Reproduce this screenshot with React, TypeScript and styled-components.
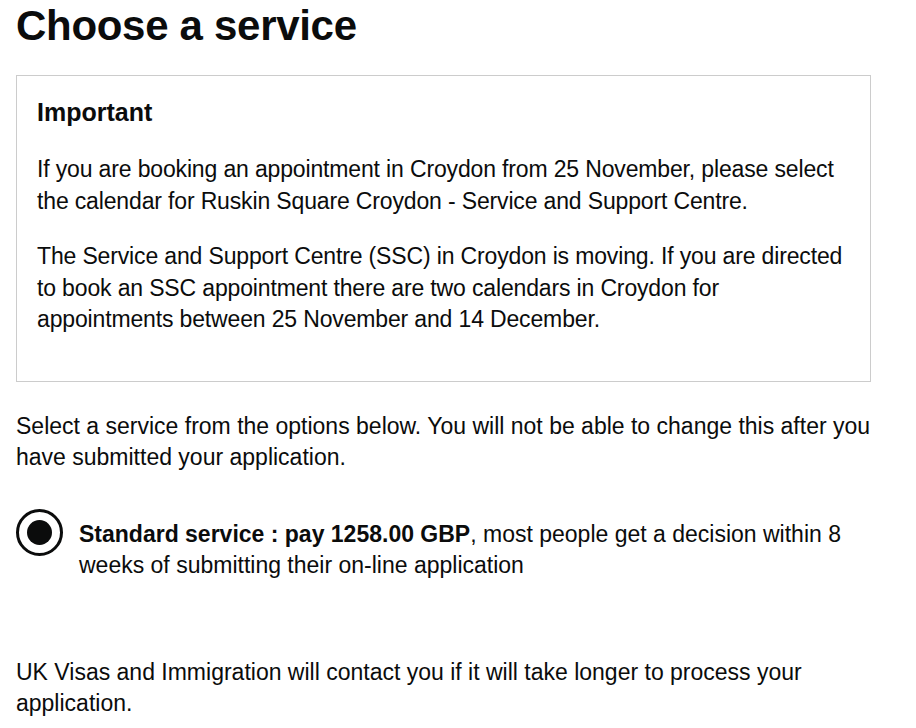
import React from 'react';
import styled, { createGlobalStyle } from 'styled-components';

const GlobalStyle = createGlobalStyle`
    html, body {
        margin: 0;
        padding: 0;
        background: #ffffff;
    }
    body {
        font-family: "Liberation Sans", Arial, sans-serif;
        color: #0b0c0c;
        -webkit-font-smoothing: antialiased;
    }
`

const Page = styled.main`
    width: 855px;
    padding: 0 16px;
    box-sizing: content-box;
`

const Heading = styled.h1`
    margin: 0 0 23px;
    font-size: 42px;
    line-height: 52px;
    font-weight: 700;
    letter-spacing: -0.3px;
`

const Panel = styled.section`
    border: 1px solid #cccccc;
    padding: 20px 10px 21px 20px;
`

const PanelTitle = styled.h2`
    margin: 0 0 26px;
    font-size: 25px;
    line-height: 32px;
    font-weight: 700;
`

const Body = styled.p<{ $gap?: number; $top?: number; $tight?: boolean }>`
    margin: ${props => props.$top ?? 0}px 0 ${props => props.$gap ?? 24}px;
    font-size: 23px;
    line-height: 31.5px;
    letter-spacing: ${props => props.$tight ? '-0.15px' : 'normal'};
`

const Option = styled.label`
    display: flex;
    align-items: flex-start;
    gap: 16px;
    margin: 44px 0 75px;
    cursor: pointer;
`

const RadioMark = styled.span<{ $checked: boolean }>`
    flex: none;
    width: 47px;
    height: 47px;
    margin-top: -9px;
    border: 3px solid #0b0c0c;
    border-radius: 50%;
    box-sizing: border-box;
    display: flex;
    align-items: center;
    justify-content: center;

    &::after {
        content: "";
        width: 25px;
        height: 25px;
        border-radius: 50%;
        background: #0b0c0c;
        opacity: ${props => props.$checked ? 1 : 0};
    }
`

const OptionText = styled.span`
    font-size: 23px;
    line-height: 31.5px;
    padding-top: 1px;

    strong {
        font-weight: 700;
    }
`

function App() {
    return (
        <Page>
            <GlobalStyle />
            <Heading>Choose a service</Heading>
            <Panel>
                <PanelTitle>Important</PanelTitle>
                <Body $tight>
                    If you are booking an appointment in Croydon from 25 November, please select
                    the calendar for Ruskin Square Croydon - Service and Support Centre.
                </Body>
                <Body $tight>
                    The Service and Support Centre (SSC) in Croydon is moving. If you are directed
                    to book an SSC appointment there are two calendars in Croydon for
                    appointments between 25 November and 14 December.
                </Body>
            </Panel>
            <Body $gap={0} $top={29}>
                Select a service from the options below. You will not be able to change this after you
                have submitted your application.
            </Body>
            <Option>
                <RadioMark $checked={true} />
                <OptionText>
                    <strong>Standard service : pay 1258.00 GBP</strong>, most people get a decision within 8
                    weeks of submitting their on-line application
                </OptionText>
            </Option>
            <Body $gap={0}>
                UK Visas and Immigration will contact you if it will take longer to process your
                application.
            </Body>
        </Page>
    );
}

export default App;
